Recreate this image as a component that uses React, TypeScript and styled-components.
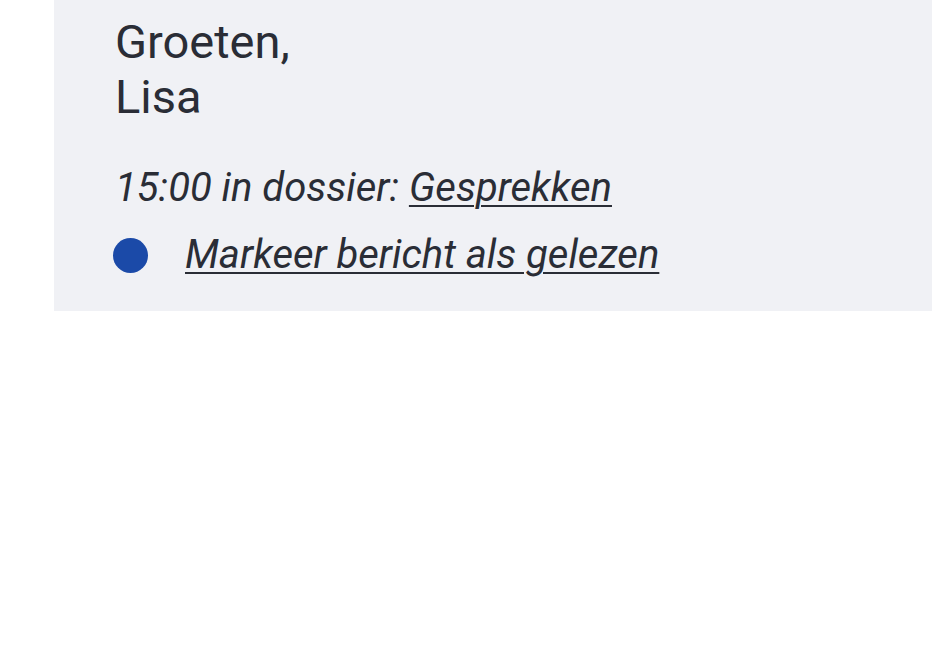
import React from "react";
import styled, { createGlobalStyle } from "styled-components";

const Global = createGlobalStyle`
  html, body { margin: 0; padding: 0; background: #ffffff; }
  body { font-family: Roboto, "Noto Sans", sans-serif; }
`;

const Page = styled.div`
  width: 932px;
  height: 669px;
  overflow: hidden;
  padding-left: 54px;
  box-sizing: border-box;
`;

const Panel = styled.div`
  background: #f0f1f5;
  width: 900px;
  height: 311px;
  box-sizing: border-box;
  padding: 14px 0 0 61px;
  color: #2a2d36;
`;

const Signature = styled.p`
  margin: 0;
  font-size: 47px;
  line-height: 55px;
`;

const Meta = styled.p`
  margin: 39px 0 0;
  font-size: 40px;
  line-height: 50px;
  font-style: italic;
`;

const Link = styled.a`
  color: inherit;
  text-decoration: underline;
  text-decoration-thickness: 2px;
  text-underline-offset: 4px;
`;

const MarkRow = styled.div`
  display: flex;
  align-items: center;
  gap: 37px;
  margin-top: 17px;
  margin-left: -2px;
  font-size: 40px;
  line-height: 50px;
  font-style: italic;
`;

const Dot = styled.span`
  width: 35px;
  height: 35px;
  border-radius: 50%;
  background: #1b4aa8;
  flex: none;
`;

export default function App() {
  return (
    <>
      <Global />
      <Page>
        <Panel>
          <Signature>
            Groeten,
            <br />
            Lisa
          </Signature>
          <Meta>
            15:00 in dossier: <Link href="#">Gesprekken</Link>
          </Meta>
          <MarkRow>
            <Dot />
            <Link href="#">Markeer bericht als gelezen</Link>
          </MarkRow>
        </Panel>
      </Page>
    </>
  );
}
